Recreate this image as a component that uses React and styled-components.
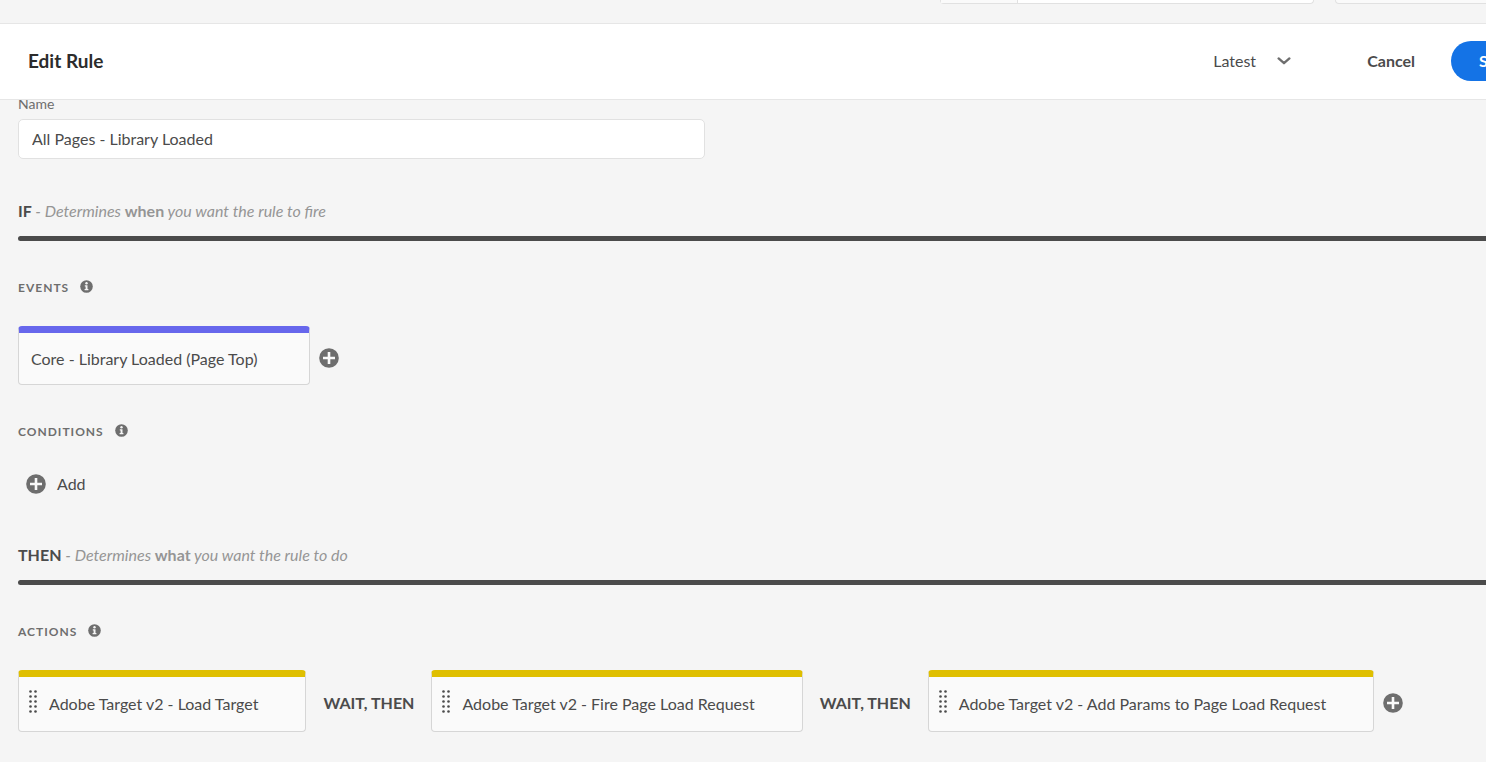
import React from "react";
import styled, { createGlobalStyle } from "styled-components";

const GlobalStyle = createGlobalStyle`
  * {
    box-sizing: border-box;
  }
  body {
    margin: 0;
    background: #f5f5f5;
    color: #4b4b4b;
    font-family: Lato, "Noto Sans", sans-serif;
    font-size: 16px;
    line-height: 24px;
  }
  button, input, select {
    font: inherit;
    color: inherit;
  }
`;

const Page = styled.div`
  overflow: hidden;
`;

/* runs a little past the right edge of the window */
const Canvas = styled.div`
  margin-right: -76px;
`;

const TopStrip = styled.div`
  display: flex;
  justify-content: flex-end;
  align-items: flex-start;
  gap: 21px;
  height: 23px;
`;

const StripBox = styled.div`
  display: flex;
  width: ${props => props.$width};
  height: 4px;
  border: 1px solid #e1e1e1;
  border-top: 0;
  border-radius: 0 0 4px 4px;
  background: ${props => (props.$filled ? "#fff" : "#fafafa")};
`;

const StripPrefix = styled.div`
  width: 77px;
  border-right: 1px solid #e1e1e1;
  background: #fafafa;
`;

const Header = styled.header`
  display: flex;
  align-items: center;
  height: 77px;
  padding: 0 20px 2px 28px;
  background: #fff;
  border: solid #e6e6e6;
  border-width: 1px 0;
`;

const Heading = styled.h1`
  flex: 1;
  margin: 0;
  font-size: 19px;
  font-weight: 700;
  color: #2c2c2c;
`;

const Picker = styled.div`
  position: relative;
  display: flex;
  align-items: center;
  margin-right: 76px;
  svg {
    position: absolute;
    right: 0;
    pointer-events: none;
  }
`;

const PickerSelect = styled.select`
  appearance: none;
  width: 78px;
  padding: 0;
  border: 0;
  background: transparent;
`;

const CancelButton = styled.button`
  margin-right: 36px;
  padding: 0;
  border: 0;
  background: transparent;
  font-weight: 700;
  cursor: pointer;
`;

const SaveButton = styled.button`
  width: 91px;
  height: 40px;
  padding: 0 28px;
  border: 0;
  border-radius: 20px;
  background: #1473e6;
  color: #fff;
  font-weight: 700;
  text-align: left;
  cursor: pointer;
`;

const Scroller = styled.main`
  overflow: hidden;
`;

const Form = styled.form`
  margin-top: -5px;
  padding: 0 18px 30px;
`;

const NameLabel = styled.label`
  display: block;
  margin-bottom: 6px;
  font-size: 14px;
  line-height: 18px;
  color: #6e6e6e;
`;

const NameInput = styled.input`
  display: block;
  width: 45%;
  height: 40px;
  padding: 0 13px 2px;
  border: 1px solid #e1e1e1;
  border-radius: 5px;
  background: #fff;
`;

const Clause = styled.h2`
  margin: 40px 0 39px;
  font-size: 16px;
  font-weight: 700;
  &::after {
    content: "";
    display: block;
    height: 5px;
    margin-top: 13px;
    border-radius: 3px;
    background: #4b4b4b;
  }
`;

const Hint = styled.em`
  color: #959595;
  font-weight: 400;
  strong {
    font-style: normal;
    font-weight: 700;
  }
`;

const GroupTitle = styled.h3`
  display: flex;
  align-items: center;
  gap: 11px;
  margin: 0 0 30px;
  font-size: 12px;
  line-height: 16px;
  font-weight: 700;
  letter-spacing: 1px;
  color: #6e6e6e;
  text-transform: uppercase;
  svg {
    margin-bottom: 3px;
  }
`;

const Row = styled.div`
  display: flex;
  align-items: center;
  margin-bottom: ${props => props.$after || "0"};
`;

const Card = styled.div`
  display: flex;
  align-items: center;
  gap: 11px;
  height: ${props => (props.$draggable ? "62px" : "59px")};
  padding: ${props => (props.$draggable ? "0 47px 0 10px" : "0 52px 0 12px")};
  border: 1px solid #d6d6d6;
  border-top: 7px solid ${props => props.$accent};
  border-radius: 4px;
  background: #fafafa;
  white-space: nowrap;
`;

const Joiner = styled.span`
  padding: 4px 17px 0;
  font-weight: 700;
  white-space: nowrap;
`;

const AddButton = styled.button`
  display: flex;
  align-items: center;
  gap: 11px;
  height: 28px;
  margin-left: ${props => (props.$labelled ? "8px" : "9px")};
  padding: ${props => (props.$labelled ? "0" : "4px 0 0")};
  border: 0;
  background: transparent;
  cursor: pointer;
`;

const PlusIcon = () => (
  <svg width="20" height="20" viewBox="0 0 20 20" aria-hidden="true">
    <circle cx="10" cy="10" r="9.8" fill="#6e6e6e" />
    <path d="M10 4v12M4 10h12" stroke="#fafafa" strokeWidth="2.6" />
  </svg>
);

const InfoIcon = () => (
  <svg width="13" height="13" viewBox="0 0 13 13" aria-hidden="true">
    <circle cx="6.5" cy="6.5" r="6.3" fill="#6e6e6e" />
    <circle cx="6.5" cy="3.3" r="1.2" fill="#f5f5f5" />
    <path d="M4.8 5.2h2.7v3.8H8.4v1.2H4.6V9h1V6.4h-.8z" fill="#f5f5f5" />
  </svg>
);

const GripIcon = () => (
  <svg width="9" height="28" viewBox="0 0 9 28" aria-hidden="true">
    {[1.5, 6.5, 11.5, 16.5, 21.5].map(y => (
      <React.Fragment key={y}>
        <circle cx="1.5" cy={y} r="1.3" fill="#4b4b4b" />
        <circle cx="6.5" cy={y} r="1.3" fill="#4b4b4b" />
      </React.Fragment>
    ))}
  </svg>
);

const ChevronIcon = () => (
  <svg width="14" height="8" viewBox="0 0 14 8" aria-hidden="true">
    <path
      d="M1.6 1.4L7 6.2l5.4-4.8"
      fill="none"
      stroke="#6e6e6e"
      strokeWidth="2.3"
      strokeLinecap="round"
      strokeLinejoin="round"
    />
  </svg>
);

const actions = [
  "Adobe Target v2 - Load Target",
  "Adobe Target v2 - Fire Page Load Request",
  "Adobe Target v2 - Add Params to Page Load Request"
];

const App = () => (
  <Page>
    <GlobalStyle />
    <Canvas>
      <TopStrip>
        <StripBox $width="374px" $filled>
          <StripPrefix />
        </StripBox>
        <StripBox $width="227px" />
      </TopStrip>
      <Header>
        <Heading>Edit Rule</Heading>
        <Picker>
          <PickerSelect aria-label="Revision">
            <option>Latest</option>
          </PickerSelect>
          <ChevronIcon />
        </Picker>
        <CancelButton type="button">Cancel</CancelButton>
        <SaveButton type="button">Save</SaveButton>
      </Header>
      <Scroller>
        <Form>
          <NameLabel htmlFor="rule-name">Name</NameLabel>
          <NameInput id="rule-name" defaultValue="All Pages - Library Loaded" />

          <Clause>
            IF{" "}
            <Hint>
              - Determines <strong>when</strong> you want the rule to fire
            </Hint>
          </Clause>
          <GroupTitle>
            Events <InfoIcon />
          </GroupTitle>
          <Row $after="39px">
            <Card $accent="#6767ec">Core - Library Loaded (Page Top)</Card>
            <AddButton type="button" aria-label="Add event">
              <PlusIcon />
            </AddButton>
          </Row>
          <GroupTitle>
            Conditions <InfoIcon />
          </GroupTitle>
          <Row $after="45px">
            <AddButton type="button" $labelled>
              <PlusIcon />
              Add
            </AddButton>
          </Row>

          <Clause>
            THEN{" "}
            <Hint>
              - Determines <strong>what</strong> you want the rule to do
            </Hint>
          </Clause>
          <GroupTitle>
            Actions <InfoIcon />
          </GroupTitle>
          <Row>
            {actions.map((name, i) => (
              <React.Fragment key={name}>
                {i > 0 && <Joiner>WAIT, THEN</Joiner>}
                <Card $accent="#dfbf00" $draggable>
                  <GripIcon />
                  {name}
                </Card>
              </React.Fragment>
            ))}
            <AddButton type="button" aria-label="Add action">
              <PlusIcon />
            </AddButton>
          </Row>
        </Form>
      </Scroller>
    </Canvas>
  </Page>
);

export default App;
